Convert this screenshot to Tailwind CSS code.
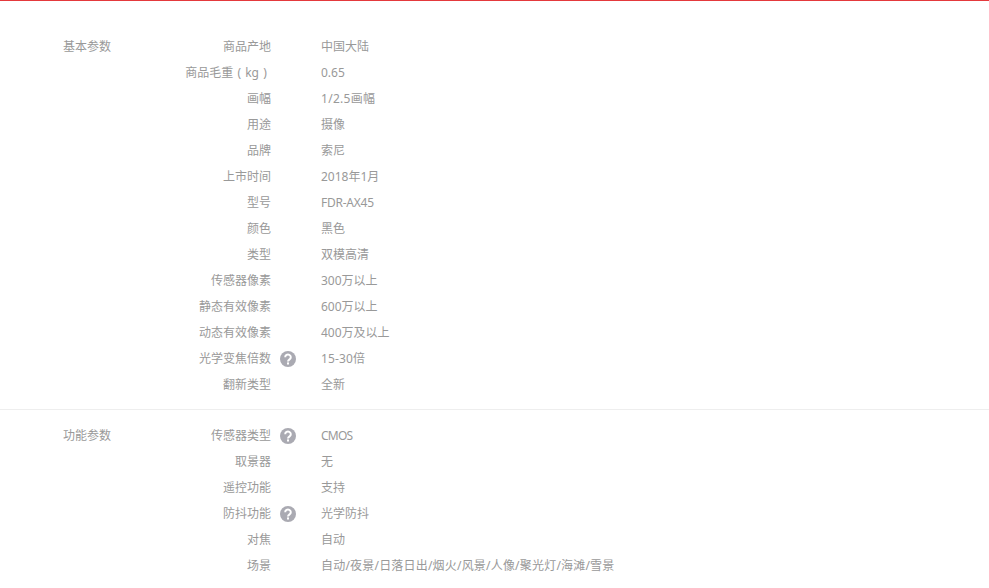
<!DOCTYPE html>
<html><head><meta charset="utf-8"><script src="https://cdn.jsdelivr.net/npm/@tailwindcss/browser@4"></script></head>
<body class="bg-white overflow-hidden">
<div class="h-[588px] overflow-hidden border-t border-[#e4393c] text-[12px] text-[#999] font-['Noto_Sans','Noto_Sans_CJK_SC',sans-serif]">
<section class="flex pt-[33px] pb-[11px] pl-[63px] border-b border-[#eee]">
<h3 class="w-[100px] font-normal leading-[26px]">基本参数</h3>
<dl class="flex flex-col">
<div class="flex h-[26px] leading-[26px]"><dt class="w-[108px] text-right">商品产地</dt><dd class="ml-[50px]">中国大陆</dd></div>
<div class="flex h-[26px] leading-[26px]"><dt class="w-[108px] text-right whitespace-nowrap">商品毛重<span class="inline-block w-3 text-center">(</span>kg<span class="inline-block w-3 text-center">)</span></dt><dd class="ml-[50px]">0.65</dd></div>
<div class="flex h-[26px] leading-[26px]"><dt class="w-[108px] text-right">画幅</dt><dd class="ml-[50px] tracking-[0.3px]">1/2.5画幅</dd></div>
<div class="flex h-[26px] leading-[26px]"><dt class="w-[108px] text-right">用途</dt><dd class="ml-[50px]">摄像</dd></div>
<div class="flex h-[26px] leading-[26px]"><dt class="w-[108px] text-right">品牌</dt><dd class="ml-[50px]">索尼</dd></div>
<div class="flex h-[26px] leading-[26px]"><dt class="w-[108px] text-right">上市时间</dt><dd class="ml-[50px]">2018年1月</dd></div>
<div class="flex h-[26px] leading-[26px]"><dt class="w-[108px] text-right">型号</dt><dd class="ml-[50px] tracking-[-0.25px]">FDR-AX45</dd></div>
<div class="flex h-[26px] leading-[26px]"><dt class="w-[108px] text-right">颜色</dt><dd class="ml-[50px]">黑色</dd></div>
<div class="flex h-[26px] leading-[26px]"><dt class="w-[108px] text-right">类型</dt><dd class="ml-[50px]">双模高清</dd></div>
<div class="flex h-[26px] leading-[26px]"><dt class="w-[108px] text-right">传感器像素</dt><dd class="ml-[50px]">300万以上</dd></div>
<div class="flex h-[26px] leading-[26px]"><dt class="w-[108px] text-right">静态有效像素</dt><dd class="ml-[50px]">600万以上</dd></div>
<div class="flex h-[26px] leading-[26px]"><dt class="w-[108px] text-right">动态有效像素</dt><dd class="ml-[50px]">400万及以上</dd></div>
<div class="flex h-[26px] leading-[26px]"><dt class="w-[108px] text-right">光学变焦倍数</dt><svg class="ml-[9px] mr-[25px] mt-[5px] w-4 h-4" viewBox="0 0 16 16"><circle cx="8" cy="8" r="8" fill="#aaaab2"/><path d="M5.2 6.2a2.8 2.6 0 1 1 4.4 2.1c-1 .7-1.6 1.1-1.6 2.2" fill="none" stroke="#fff" stroke-width="2"/><rect x="7" y="11.4" width="2" height="2.1" fill="#fff"/></svg><dd class="tracking-[0.15px]">15-30倍</dd></div>
<div class="flex h-[26px] leading-[26px]"><dt class="w-[108px] text-right">翻新类型</dt><dd class="ml-[50px]">全新</dd></div>
</dl>
</section>
<section class="flex pt-[13px] pl-[63px]">
<h3 class="w-[100px] font-normal leading-[26px]">功能参数</h3>
<dl class="flex flex-col">
<div class="flex h-[26px] leading-[26px]"><dt class="w-[108px] text-right">传感器类型</dt><svg class="ml-[9px] mr-[25px] mt-[5px] w-4 h-4" viewBox="0 0 16 16"><circle cx="8" cy="8" r="8" fill="#aaaab2"/><path d="M5.2 6.2a2.8 2.6 0 1 1 4.4 2.1c-1 .7-1.6 1.1-1.6 2.2" fill="none" stroke="#fff" stroke-width="2"/><rect x="7" y="11.4" width="2" height="2.1" fill="#fff"/></svg><dd class="tracking-[-0.75px]">CMOS</dd></div>
<div class="flex h-[26px] leading-[26px]"><dt class="w-[108px] text-right">取景器</dt><dd class="ml-[50px]">无</dd></div>
<div class="flex h-[26px] leading-[26px]"><dt class="w-[108px] text-right">遥控功能</dt><dd class="ml-[50px]">支持</dd></div>
<div class="flex h-[26px] leading-[26px]"><dt class="w-[108px] text-right">防抖功能</dt><svg class="ml-[9px] mr-[25px] mt-[5px] w-4 h-4" viewBox="0 0 16 16"><circle cx="8" cy="8" r="8" fill="#aaaab2"/><path d="M5.2 6.2a2.8 2.6 0 1 1 4.4 2.1c-1 .7-1.6 1.1-1.6 2.2" fill="none" stroke="#fff" stroke-width="2"/><rect x="7" y="11.4" width="2" height="2.1" fill="#fff"/></svg><dd>光学防抖</dd></div>
<div class="flex h-[26px] leading-[26px]"><dt class="w-[108px] text-right">对焦</dt><dd class="ml-[50px]">自动</dd></div>
<div class="flex h-[26px] leading-[26px]"><dt class="w-[108px] text-right">场景</dt><dd class="ml-[50px] tracking-[0.2px]">自动/夜景/日落日出/烟火/风景/人像/聚光灯/海滩/雪景</dd></div>
</dl>
</section>
</div>
</body></html>
